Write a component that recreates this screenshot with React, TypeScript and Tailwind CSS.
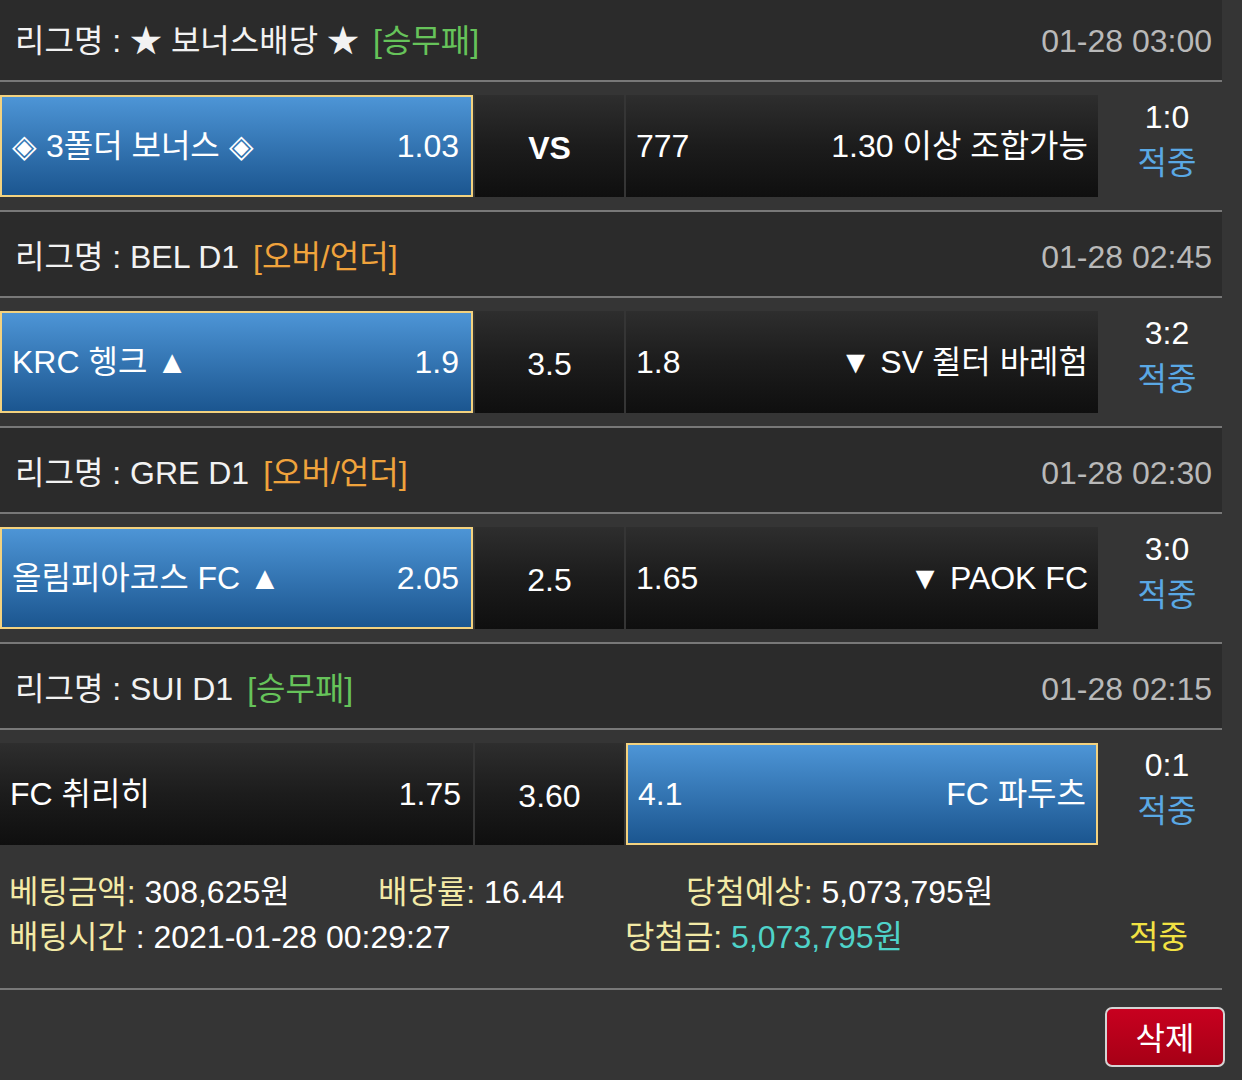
import React from "react";

type Side = "home" | "away";

interface Match {
  league: string;
  market: string;
  marketColor: string;
  time: string;
  home: string;
  homeOdds: string;
  draw: string;
  drawBold?: boolean;
  awayOdds: string;
  away: string;
  pick: Side;
  score: string;
}

const matches: Match[] = [
  {
    league: "★ 보너스배당 ★",
    market: "[승무패]",
    marketColor: "text-[#66c35a]",
    time: "01-28 03:00",
    home: "◈ 3폴더 보너스 ◈",
    homeOdds: "1.03",
    draw: "VS",
    drawBold: true,
    awayOdds: "777",
    away: "1.30 이상 조합가능",
    pick: "home",
    score: "1:0",
  },
  {
    league: "BEL D1",
    market: "[오버/언더]",
    marketColor: "text-[#f0a33c]",
    time: "01-28 02:45",
    home: "KRC 헹크 ▲",
    homeOdds: "1.9",
    draw: "3.5",
    awayOdds: "1.8",
    away: "▼ SV 쥘터 바레험",
    pick: "home",
    score: "3:2",
  },
  {
    league: "GRE D1",
    market: "[오버/언더]",
    marketColor: "text-[#f0a33c]",
    time: "01-28 02:30",
    home: "올림피아코스 FC ▲",
    homeOdds: "2.05",
    draw: "2.5",
    awayOdds: "1.65",
    away: "▼ PAOK FC",
    pick: "home",
    score: "3:0",
  },
  {
    league: "SUI D1",
    market: "[승무패]",
    marketColor: "text-[#66c35a]",
    time: "01-28 02:15",
    home: "FC 취리히",
    homeOdds: "1.75",
    draw: "3.60",
    awayOdds: "4.1",
    away: "FC 파두츠",
    pick: "away",
    score: "0:1",
  },
];

const picked =
  "bg-gradient-to-b from-[#4d95d6] to-[#1b5690] border-2 border-[#f3d27f]";
const plain = "bg-gradient-to-b from-[#2e2e2e] via-[#1c1c1c] to-[#0f0f0f]";

const MatchBlock: React.FC<{ m: Match; last: boolean }> = ({ m, last }) => {
  return (
    <div>
      {/* 리그 헤더 */}
      <div className="h-[86px] bg-[#2b2b2b] border-b-2 border-[#787878] flex items-center justify-between pl-[15px] pr-[10px] pt-[6px]">
        <div className="flex items-center text-[#f2f2f2]">
          <span>리그명 : {m.league}</span>
          <span className={`ml-[14px] ${m.marketColor}`}>{m.market}</span>
        </div>
        <span className="text-[#b9b9b9]">{m.time}</span>
      </div>
      {/* 경기 */}
      <div
        className={`pt-[13px] pb-[13px] flex gap-[2px] ${
          last ? "h-[128px]" : "h-[130px] border-b-2 border-[#787878]"
        }`}
      >
        <div
          className={`w-[473px] flex items-center justify-between pl-[10px] pr-[12px] ${
            m.pick === "home" ? picked : plain
          }`}
        >
          <span>{m.home}</span>
          <span>{m.homeOdds}</span>
        </div>
        <div
          className={`w-[149px] flex items-center justify-center pt-[4px] ${plain} ${
            m.drawBold ? "font-bold" : ""
          }`}
        >
          {m.draw}
        </div>
        <div
          className={`w-[472px] flex items-center justify-between pl-[10px] pr-[10px] ${
            m.pick === "away" ? picked : plain
          }`}
        >
          <span>{m.awayOdds}</span>
          <span>{m.away}</span>
        </div>
        <div className="flex-1 flex flex-col items-center justify-center pl-[12px] leading-[46px] -mt-[12px]">
          <span>{m.score}</span>
          <span className="text-[#5aa8e4]">적중</span>
        </div>
      </div>
    </div>
  );
};

export default function App() {
  return (
    <div
      className="min-h-screen bg-[#353535] text-white text-[32px] overflow-hidden"
      style={{ fontFamily: '"Liberation Sans", "Noto Sans CJK KR", sans-serif' }}
    >
      <div className="w-[1222px] -mt-[4px]">
        {matches.map((m, i) => (
          <MatchBlock key={i} m={m} last={i === matches.length - 1} />
        ))}
        {/* 베팅 요약 */}
        <div className="pt-[12px] pb-[28px] border-b-2 border-[#787878] leading-[45px]">
          <div className="flex">
            <span className="w-[378px] pl-[9px]">
              <span className="text-[#f3eaa6]">베팅금액:</span> 308,625원
            </span>
            <span className="w-[308px]">
              <span className="text-[#f3eaa6]">배당률:</span> 16.44
            </span>
            <span>
              <span className="text-[#f3eaa6]">당첨예상:</span> 5,073,795원
            </span>
          </div>
          <div className="flex">
            <span className="w-[625px] pl-[9px]">
              <span className="text-[#f3eaa6]">배팅시간</span> : 2021-01-28
              00:29:27
            </span>
            <span className="w-[504px]">
              <span className="text-[#f3eaa6]">당첨금:</span>{" "}
              <span className="text-[#4fd3c9]">5,073,795원</span>
            </span>
            <span className="text-[#f2e243]">적중</span>
          </div>
        </div>
      </div>
      <div className="flex justify-end pt-[17px] pr-[17px]">
        <button className="w-[120px] h-[60px] pt-[3px] rounded-[7px] border-2 border-[#d4d4d4] bg-gradient-to-b from-[#c8001f] to-[#a60016] text-white text-[32px]">
          삭제
        </button>
      </div>
    </div>
  );
}
